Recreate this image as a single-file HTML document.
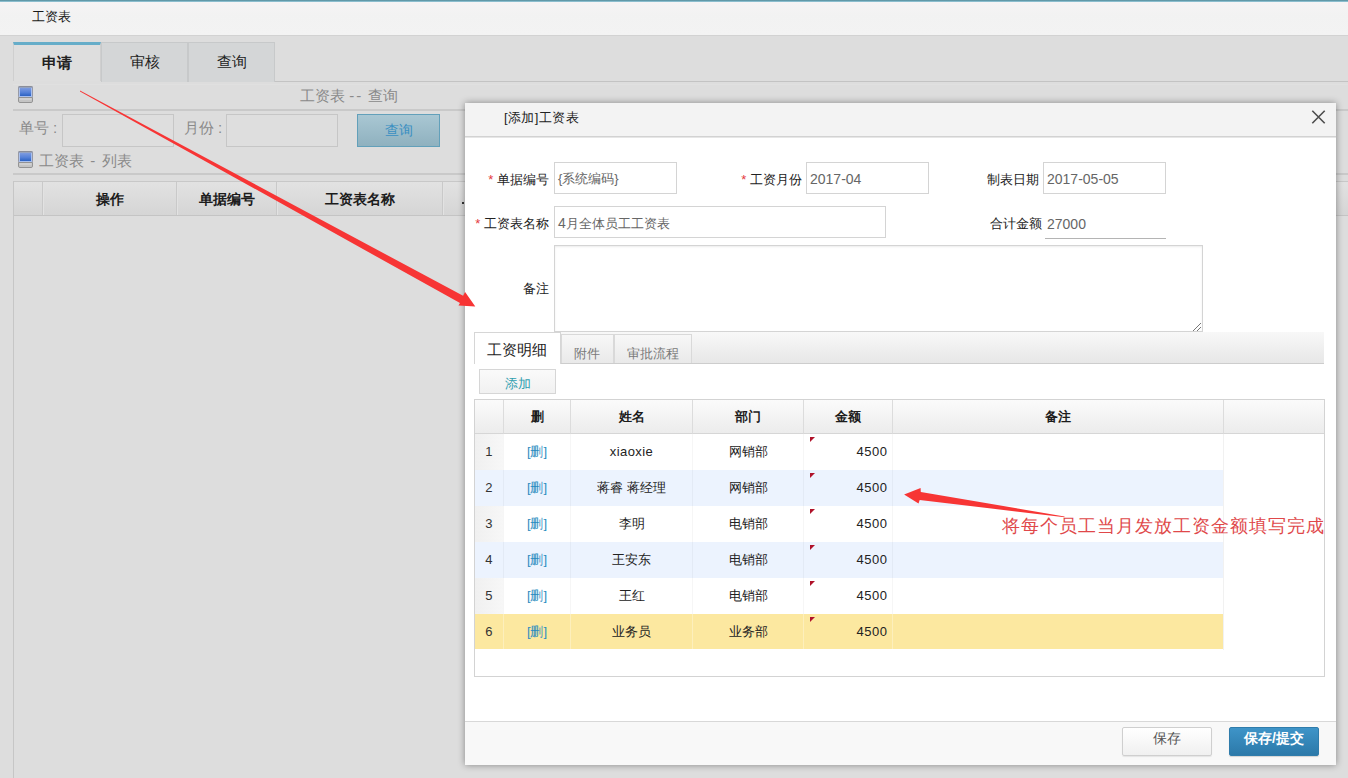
<!DOCTYPE html>
<html lang="zh">
<head>
<meta charset="utf-8">
<title>工资表</title>
<style>
*{box-sizing:border-box;margin:0;padding:0}
html,body{width:1348px;height:778px;overflow:hidden}
body{position:relative;background:#dddddd;font-family:"Liberation Sans",sans-serif;font-size:13px;color:#222}
.abs{position:absolute}
/* top header */
#topline{left:0;top:0;width:1348px;height:2px;background:linear-gradient(#4d8796,#9fcfe0)}
#hdr{left:0;top:2px;width:1348px;height:33px;background:linear-gradient(#f6f4f5,#f2f2f2 40%,#f3f3f3)}
#hdrline{left:0;top:35px;width:1348px;height:1px;background:#d2d2d2}
#hdr span{position:absolute;left:32px;top:7px;font-size:13px;line-height:16px;color:#1a1a1a}
/* page tabs */
.ptab{top:42px;height:40px;width:87px;text-align:center;font-size:15px;line-height:38px;color:#222;background:#d4d6d7;border:1px solid #c7c9ca;border-bottom:none}
#pt1{left:13px;width:88px;background:#dedede;border-top:3px solid #66adc9;border-left:1px solid #cfcfcf;border-right:1px solid #cfcfcf;font-weight:bold;line-height:35px;height:39px}
#pt2{left:101px}
#pt3{left:188px}
.hline{height:1px;background:#c6c6c6}
.lbl{color:#8a8a8a;font-size:15px;line-height:18px;white-space:nowrap}
.pinput{border:1px solid #c6c6c6;background:#dedede;height:33px}
.icon{width:15px;height:17px}
/* page grid header */
#ghead{left:13px;top:181px;width:1335px;height:35px;background:linear-gradient(#e2e2e2,#d5d5d5);border-top:1px solid #c8c8c8;border-bottom:1px solid #c4c4c4}
.gh{top:182px;height:33px;border-left:1px solid #c9c9c9;box-shadow:inset 1px 0 0 #e2e2e2;text-align:center;font-weight:bold;font-size:14px;line-height:35px;color:#1c1c1c}
/* dialog */
#dlg{left:465px;top:103px;width:871px;height:662px;background:#fff;box-shadow:0 0 7px rgba(0,0,0,.4)}
#dtitle{left:0;top:0;width:871px;height:34px;background:#f3f3f3;border-bottom:1px solid #d2d2d2;box-shadow:0 1px 0 #e6e6e6}
#dtitle span{position:absolute;left:39px;top:7px;letter-spacing:.4px;font-size:13px;line-height:16px;color:#222}
.flabel{font-size:13px;line-height:16px;color:#222;text-align:right;white-space:nowrap}
.flabel i{font-style:normal;color:#e4393c}
.finput{border:1px solid #d4d4d4;background:#fff;height:32px;font-size:13px;line-height:32px;color:#666;padding-left:3px;white-space:nowrap}
.num{font-size:14px !important}
.dtab{top:231px;height:29px;border:1px solid #d9d9d9;border-bottom:none;background:linear-gradient(#f7f7f7,#e9e9e9);font-size:13px;color:#7a7a7a;text-align:center;line-height:37px}
/* grid */
#grid{left:9px;top:296px;width:851px;height:278px;border:1px solid #d3d3d3;background:#fff}
.th{top:0;height:34px;background:linear-gradient(#fbfbfb,#ececec);border-left:1px solid #dcdcdc;border-bottom:1px solid #d6d6d6;text-align:center;font-weight:bold;font-size:13px;line-height:34px;color:#1c1c1c}
.row{left:0;width:748px;height:36px}
.row div{position:absolute;top:0;height:36px;line-height:35px;font-size:13px;text-align:center;color:#222;white-space:nowrap}
.row .n{left:0;width:28px;text-align:center;color:#333}
.row .d{left:28px;width:67px;color:#2b8cc0;border-left:1px solid rgba(0,0,0,.035)}
.row .a{left:95px;width:122px;border-left:1px solid rgba(0,0,0,.035)}
.row .b{left:217px;width:111px;border-left:1px solid rgba(0,0,0,.035)}
.row .c{left:328px;width:89px;text-align:right;padding-right:4.5px;border-left:1px solid rgba(0,0,0,.035)}
.row .e{left:417px;width:331px;border-left:1px solid rgba(0,0,0,.035)}
.row .c:before{content:"";position:absolute;left:6px;top:3px;border-top:5px solid #b0122a;border-right:5px solid transparent}
.row .c,.row .n{letter-spacing:.5px}
.lat{letter-spacing:.45px}
.odd .n{background:linear-gradient(90deg,#f0f0f0,#f7f7f7)}
.even{background:#ecf3fe}
.sel{background:#fce8a0;height:35px}
.sel div{border-left-color:rgba(255,255,255,.3) !important;height:35px !important}
#dfoot{left:0;top:618px;width:871px;height:44px;background:#f8f8f8;border-top:1px solid #d8d8d8}
.btn{top:624px;height:29px;border-radius:2px;font-size:14px;text-align:center;line-height:21px}
</style>
</head>
<body>
<div class="abs" id="topline"></div>
<div class="abs" id="hdr"><span>工资表</span></div>
<div class="abs" id="hdrline"></div>

<!-- tab line -->
<div class="abs hline" style="left:101px;top:81px;width:1247px;background:#c3c3c3"></div>
<div class="abs hline" style="left:13px;top:84px;width:1335px;background:#e0e0e0"></div>
<div class="abs ptab" id="pt1">申请</div>
<div class="abs ptab" id="pt2">审核</div>
<div class="abs ptab" id="pt3">查询</div>

<!-- search panel title -->
<svg class="abs icon" style="left:18px;top:86px" width="15" height="17" viewBox="0 0 15 17"><defs><linearGradient id="scr" x1="0" y1="0" x2="0" y2="1"><stop offset="0" stop-color="#7d9be0"/><stop offset="0.55" stop-color="#5581d8"/><stop offset="1" stop-color="#2c62c2"/></linearGradient></defs><rect x="0.5" y="0.5" width="14" height="11" rx="1" fill="#a9c0ee" stroke="#9699a6"/><rect x="0.5" y="0.5" width="14" height="1" fill="#80848e"/><rect x="2" y="2" width="11" height="8" fill="url(#scr)"/><path d="M0.5 11.5 h14 v3.6 q0 1.4 -1.4 1.4 h-11.2 q-1.4 0 -1.4 -1.4 z" fill="#c4c4c4" stroke="#939393"/><rect x="1.5" y="12.5" width="12" height="1" fill="#dcdcdc"/></svg>
<div class="abs lbl" style="left:300px;top:87px">工资表 <span style="letter-spacing:2.2px">--</span> 查询</div>
<div class="abs hline" style="left:13px;top:109px;width:1335px;height:2px;background:#c9c9c9"></div>

<div class="abs lbl" style="left:19px;top:119px">单号<span style="margin-left:4px">:</span></div>
<div class="abs pinput" style="left:62px;top:114px;width:112px"></div>
<div class="abs lbl" style="left:184px;top:119px">月份<span style="margin-left:4px">:</span></div>
<div class="abs pinput" style="left:226px;top:114px;width:112px"></div>
<div class="abs" style="left:357px;top:114px;width:83px;height:33px;border:1px solid #62a0ba;background:linear-gradient(#a9c7d3,#8fb1bf);color:#3a8fc2;font-size:14px;line-height:31px;text-align:center">查询</div>

<svg class="abs icon" style="left:18px;top:151px" width="15" height="17" viewBox="0 0 15 17"><defs><linearGradient id="scr2" x1="0" y1="0" x2="0" y2="1"><stop offset="0" stop-color="#7d9be0"/><stop offset="0.55" stop-color="#5581d8"/><stop offset="1" stop-color="#2c62c2"/></linearGradient></defs><rect x="0.5" y="0.5" width="14" height="11" rx="1" fill="#a9c0ee" stroke="#9699a6"/><rect x="0.5" y="0.5" width="14" height="1" fill="#80848e"/><rect x="2" y="2" width="11" height="8" fill="url(#scr2)"/><path d="M0.5 11.5 h14 v3.6 q0 1.4 -1.4 1.4 h-11.2 q-1.4 0 -1.4 -1.4 z" fill="#c4c4c4" stroke="#939393"/><rect x="1.5" y="12.5" width="12" height="1" fill="#dcdcdc"/></svg>
<div class="abs lbl" style="left:39px;top:152px">工资表 <span style="margin:0 2.2px">-</span> 列表</div>
<div class="abs hline" style="left:13px;top:173px;width:1335px;height:2px;background:#c9c9c9"></div>

<!-- page grid -->
<div class="abs" id="ghead"></div>
<div class="abs" style="left:13px;top:181px;width:1px;height:597px;background:#c6c6c6"></div>
<div class="abs gh" style="left:42px;width:134px">操作</div>
<div class="abs gh" style="left:176px;width:100px">单据编号</div>
<div class="abs gh" style="left:276px;width:166px">工资表名称</div>
<div class="abs gh" style="left:442px;width:60px"></div>

<div class="abs" style="left:462px;top:202px;width:2px;height:2px;background:#333"></div>
<!-- dialog -->
<div class="abs" id="dlg">
  <div class="abs" id="dtitle"><span>[添加]工资表</span>
    <svg class="abs" style="left:846px;top:7px" width="15" height="14" viewBox="0 0 15 14"><path d="M1.3 0.8 L13.7 13.2 M13.7 0.8 L1.3 13.2" stroke="#4d4d4d" stroke-width="1.6" fill="none"/></svg>
  </div>

  <div class="abs flabel" style="left:0;top:69px;width:84px"><i>*</i> 单据编号</div>
  <div class="abs finput" style="left:89px;top:59px;width:123px">{系统编码}</div>
  <div class="abs flabel" style="left:250px;top:69px;width:87px"><i>*</i> 工资月份</div>
  <div class="abs finput" style="left:341px;top:59px;width:123px"><span class="num">2017-04</span></div>
  <div class="abs flabel" style="left:490px;top:69px;width:84px">制表日期</div>
  <div class="abs finput" style="left:578px;top:59px;width:123px"><span class="num">2017-05-05</span></div>

  <div class="abs flabel" style="left:0;top:113px;width:84px"><i>*</i> 工资表名称</div>
  <div class="abs finput" style="left:89px;top:103px;width:332px"><span class="num">4</span>月全体员工工资表</div>
  <div class="abs flabel" style="left:490px;top:113px;width:87px">合计金额</div>
  <div class="abs" style="left:580px;top:104px;width:121px;height:32px;border-bottom:1px solid #b4b4b4;font-size:14px;line-height:34px;color:#666;padding-left:2px">27000</div>

  <div class="abs flabel" style="left:0;top:178px;width:84px">备注</div>
  <div class="abs" style="left:89px;top:142px;width:649px;height:87px;border:1px solid #d4d4d4;background:#fff;box-shadow:inset 0 1px 2px rgba(0,0,0,.08)">
    <svg class="abs" style="right:0;bottom:-1px" width="10" height="10" viewBox="0 0 10 10"><path d="M9 1 L1 9 M9 5 L5 9" stroke="#777" stroke-width="1"/></svg>
  </div>

  <!-- inner tabs -->
  <div class="abs" style="left:9px;top:229px;width:850px;height:32px;background:linear-gradient(#f8f8f8,#e7e7e7);border-bottom:1px solid #cdcdcd"></div>
  <div class="abs" style="left:9px;top:229px;width:87px;height:32px;background:#fff;border:1px solid #d6d6d6;border-bottom:none;font-size:15px;line-height:34px;color:#222;text-align:center;padding-right:2px">工资明细</div>
  <div class="abs dtab" style="left:96px;width:53px;padding-right:2px">附件</div>
  <div class="abs dtab" style="left:149px;width:78px">审批流程</div>

  <div class="abs" style="left:14px;top:266px;width:77px;height:25px;border:1px solid #d6d6d6;background:linear-gradient(#fafafa,#f1f1f1);color:#31a0b0;font-size:13px;line-height:27px;text-align:center">添加</div>

  <div class="abs" id="grid">
    <div class="abs th" style="left:0;width:28px;border-left:none"></div>
    <div class="abs th" style="left:28px;width:67px">删</div>
    <div class="abs th" style="left:95px;width:122px">姓名</div>
    <div class="abs th" style="left:217px;width:111px">部门</div>
    <div class="abs th" style="left:328px;width:89px">金额</div>
    <div class="abs th" style="left:417px;width:331px">备注</div>
    <div class="abs th" style="left:748px;width:101px"></div>
    <div class="abs" style="left:748px;top:34px;width:1px;height:216px;background:#f1f1f1"></div>

    <div class="abs row odd" style="top:34px"><div class="n">1</div><div class="d">[删]</div><div class="a lat">xiaoxie</div><div class="b">网销部</div><div class="c">4500</div><div class="e"></div></div>
    <div class="abs row even" style="top:70px"><div class="n">2</div><div class="d">[删]</div><div class="a">蒋睿 蒋经理</div><div class="b">网销部</div><div class="c">4500</div><div class="e"></div></div>
    <div class="abs row odd" style="top:106px"><div class="n">3</div><div class="d">[删]</div><div class="a">李明</div><div class="b">电销部</div><div class="c">4500</div><div class="e"></div></div>
    <div class="abs row even" style="top:142px"><div class="n">4</div><div class="d">[删]</div><div class="a">王安东</div><div class="b">电销部</div><div class="c">4500</div><div class="e"></div></div>
    <div class="abs row odd" style="top:178px"><div class="n">5</div><div class="d">[删]</div><div class="a">王红</div><div class="b">电销部</div><div class="c">4500</div><div class="e"></div></div>
    <div class="abs row sel" style="top:214px"><div class="n">6</div><div class="d">[删]</div><div class="a">业务员</div><div class="b">业务部</div><div class="c">4500</div><div class="e"></div></div>
  </div>

  <div class="abs" id="dfoot"></div>
  <div class="abs btn" style="left:657px;width:90px;border:1px solid #cfcfcf;background:linear-gradient(#ffffff,#f0f0f0);color:#555;box-shadow:0 1px 1px rgba(0,0,0,.08)">保存</div>
  <div class="abs btn" style="left:764px;width:90px;border:1px solid #2f7cab;background:linear-gradient(#3e94c8,#2c79a9);color:#fff;font-weight:bold;box-shadow:0 1px 1px rgba(0,0,0,.15)">保存/提交</div>
</div>

<!-- annotations -->
<svg class="abs" style="left:0;top:0" width="1348" height="778" viewBox="0 0 1348 778">
  <polygon points="80,90.6 463.1,295.8 465.1,292 475.3,306.4 458.5,305.4 460,303.1 80,91.4" fill="#f73535"/>
  <polygon points="1064.5,516.4 920.8,492 920.6,488.1 904.1,494.5 918.5,503.5 919.7,500 1064.5,517.2" fill="#f73535"/>
</svg>
<div class="abs" style="left:1002px;top:515px;font-family:'Liberation Sans',serif;font-size:18px;line-height:22px;letter-spacing:1px;color:#e0484a;white-space:nowrap">将每个员工当月发放工资金额填写完成</div>
</body>
</html>
